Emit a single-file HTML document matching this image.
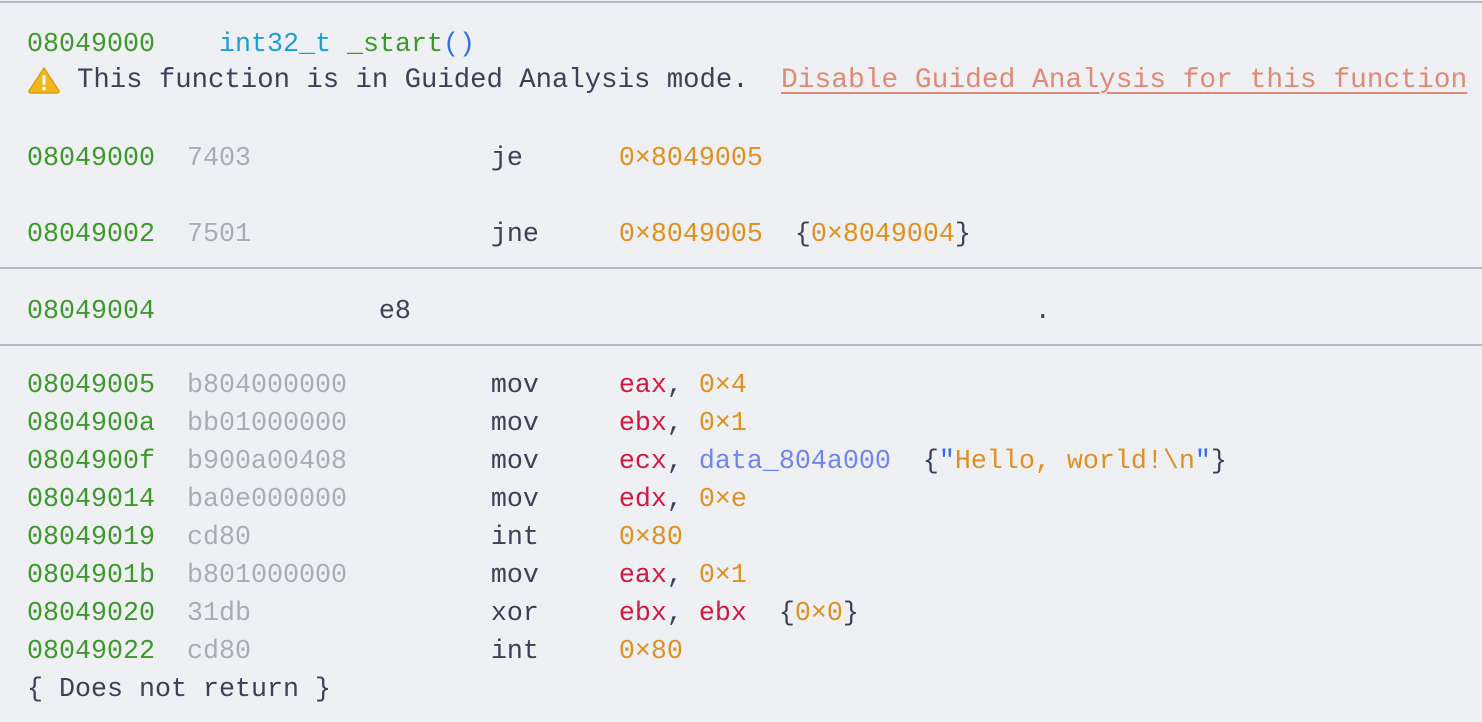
<!DOCTYPE html>
<html><head><style>
html,body{margin:0;padding:0;}
body{width:1482px;height:722px;background:#eff0f4;position:relative;overflow:hidden;font-family:"Liberation Mono","DejaVu Sans Mono",monospace;font-size:26.67px;color:#3d4157;}
.l{position:absolute;left:27px;white-space:pre;line-height:38px;height:38px;}
.hr{position:absolute;left:0;width:1482px;height:2px;background:#b4b7c4;}
.a{color:#3c9a2a}.b{color:#a9acb8}.r{color:#d4183f}.o{color:#e0901e}.d{color:#6f86f0}.c{color:#1aa0d8}.p{color:#2f6ff0}.g{color:#3c9a2a}
.lnk{color:#e08a75;text-decoration:underline;text-decoration-thickness:2px;text-underline-offset:5px;}
.w{position:absolute;top:62px;left:27px;width:1455px;height:38px;line-height:38px;white-space:nowrap;}
</style></head><body>
<div class="hr" style="top:1px"></div>
<div class="l" style="top:26px"><span class="a">08049000</span>    <span class="c">int32_t</span> <span class="g">_start</span><span class="p">()</span></div>
<div class="w"><svg style="position:absolute;left:0;top:4px" width="34" height="28" viewBox="0 0 34 28"><path d="M17 2 L32 25 Q32 27 30 27 L4 27 Q2 27 2 25 Z" fill="#f2b81c" stroke="#d9a010" stroke-width="1.5" stroke-linejoin="round"/><rect x="15.5" y="9" width="3" height="10" rx="1.2" fill="#fff"/><circle cx="17" cy="22.5" r="1.8" fill="#fff"/></svg><span style="position:absolute;left:50px;top:0;font-size:27.3px">This function is in Guided Analysis mode.</span><span class="lnk" style="position:absolute;left:754px;top:0;font-size:27.9px">Disable Guided Analysis for this function</span></div>
<div class="l" style="top:140px"><span class="a">08049000</span>  <span class="b">7403</span>               je      <span class="o">0×8049005</span></div>
<div class="l" style="top:216px"><span class="a">08049002</span>  <span class="b">7501</span>               jne     <span class="o">0×8049005</span>  {<span class="o">0×8049004</span>}</div>
<div class="hr" style="top:267px"></div>
<div class="l" style="top:293px"><span class="a">08049004</span>              e8                                       .</div>
<div class="hr" style="top:344px"></div>
<div class="l" style="top:367px"><span class="a">08049005</span>  <span class="b">b804000000</span>         mov     <span class="r">eax</span>, <span class="o">0×4</span></div>
<div class="l" style="top:405px"><span class="a">0804900a</span>  <span class="b">bb01000000</span>         mov     <span class="r">ebx</span>, <span class="o">0×1</span></div>
<div class="l" style="top:443px"><span class="a">0804900f</span>  <span class="b">b900a00408</span>         mov     <span class="r">ecx</span>, <span class="d">data_804a000</span>  {<span class="p">"</span><span class="o">Hello, world!\n</span><span class="p">"</span>}</div>
<div class="l" style="top:481px"><span class="a">08049014</span>  <span class="b">ba0e000000</span>         mov     <span class="r">edx</span>, <span class="o">0×e</span></div>
<div class="l" style="top:519px"><span class="a">08049019</span>  <span class="b">cd80</span>               int     <span class="o">0×80</span></div>
<div class="l" style="top:557px"><span class="a">0804901b</span>  <span class="b">b801000000</span>         mov     <span class="r">eax</span>, <span class="o">0×1</span></div>
<div class="l" style="top:595px"><span class="a">08049020</span>  <span class="b">31db</span>               xor     <span class="r">ebx</span>, <span class="r">ebx</span>  {<span class="o">0×0</span>}</div>
<div class="l" style="top:633px"><span class="a">08049022</span>  <span class="b">cd80</span>               int     <span class="o">0×80</span></div>
<div class="l" style="top:671px">{ Does not return }</div>
</body></html>
